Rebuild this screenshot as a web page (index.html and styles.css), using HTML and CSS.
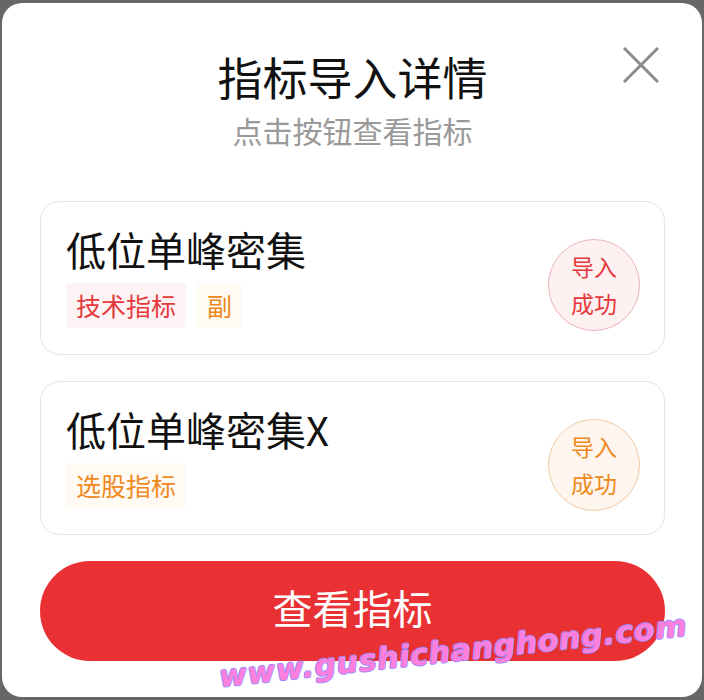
FILE: index.html
```html
<!DOCTYPE html>
<html lang="zh-CN">
<head>
  <meta charset="UTF-8">
  <meta name="viewport" content="width=device-width, initial-scale=1.0">
  <title>指标导入详情</title>
  <link rel="stylesheet" href="styles.css">
</head>
<body>
  <div class="modal">
    <button class="close-btn" aria-label="关闭">
      <svg width="36" height="36" viewBox="0 0 36 36">
        <line x1="1" y1="1" x2="35" y2="35" stroke="#8c8c8c" stroke-width="3" />
        <line x1="35" y1="1" x2="1" y2="35" stroke="#8c8c8c" stroke-width="3" />
      </svg>
    </button>
    <h1 class="modal-title">指标导入详情</h1>
    <p class="modal-sub">点击按钮查看指标</p>

    <div class="card-list">
      <div class="card">
        <div class="card-info">
          <h3>低位单峰密集</h3>
          <div class="tags">
            <span class="tag tag-red">技术指标</span>
            <span class="tag tag-orange">副</span>
          </div>
        </div>
        <div class="badge badge-red">导入<br>成功</div>
      </div>
      <div class="card">
        <div class="card-info">
          <h3>低位单峰密集X</h3>
          <div class="tags">
            <span class="tag tag-orange">选股指标</span>
          </div>
        </div>
        <div class="badge badge-orange">导入<br>成功</div>
      </div>
    </div>

    <button class="view-btn">查看指标</button>
  </div>

  <div class="watermark">www.gushichanghong.com</div>
</body>
</html>
```

FILE: styles.css
```css
body {
  margin: 0;
  padding: 3px 2px;
  background-color: #676767;
  font-family: "Noto Sans CJK SC", "Noto Sans", sans-serif;
  overflow: hidden;
}
.modal {
  position: relative;
  background-color: #fff;
  border-radius: 20px;
  padding: 46px 37px 37px 38px;
  height: 694px;
  box-sizing: border-box;
}
.close-btn {
  position: absolute;
  top: 44px;
  right: 43px;
  padding: 0;
  border: none;
  background: none;
  width: 36px;
  height: 36px;
}
.close-btn svg {
  display: block;
}
.modal-title {
  margin: 0;
  text-align: center;
  font-size: 45px;
  line-height: 56px;
  font-weight: 400;
  color: #111;
}
.modal-sub {
  margin: 5px 0 0;
  text-align: center;
  font-size: 30px;
  line-height: 40px;
  color: #999;
}
.card-list {
  margin-top: 51px;
  display: flex;
  flex-direction: column;
  gap: 26px;
}
.card {
  display: flex;
  border: 1px solid #e4e4e4;
  border-radius: 20px;
  padding: 23px 24px 23px 25px;
}
.card-info {
  flex: 1;
}
.card-info h3 {
  margin: 0;
  font-size: 40px;
  line-height: 48px;
  font-weight: 400;
  color: #111;
}
.tags {
  display: flex;
  gap: 11px;
  margin: 10px 0 3px;
}
.tag {
  font-size: 25px;
  line-height: 45px;
  padding: 0 10px;
  border-radius: 4px;
}
.tag-red {
  color: #e5383b;
  background-color: #fdf3f4;
}
.tag-orange {
  color: #ef891c;
  background-color: #fffaf3;
}
.badge {
  align-self: flex-end;
  width: 90px;
  height: 90px;
  border-radius: 50%;
  display: flex;
  align-items: center;
  justify-content: center;
  text-align: center;
  font-size: 23px;
  line-height: 37px;
}
.badge-red {
  color: #e5383b;
  background-color: #fdf1f2;
  border: 1px solid #e9b4ba;
}
.badge-orange {
  color: #ef891c;
  background-color: #fef6ee;
  border: 1px solid #f2caa3;
}
.view-btn {
  display: block;
  width: 100%;
  height: 100px;
  margin-top: 26px;
  padding: 0 0 8px;
  border: none;
  border-radius: 50px;
  background-color: #e93133;
  color: #fff;
  font-family: inherit;
  font-size: 40px;
}
.watermark {
  position: absolute;
  left: 221px;
  top: 659px;
  transform-origin: left bottom;
  transform: rotate(-6.3deg);
  font-family: "DejaVu Sans", sans-serif;
  font-weight: 700;
  font-style: italic;
  font-size: 30px;
  letter-spacing: 0.8px;
  color: #ff7fdc;
  text-shadow: 1px 0 #9b8cff, -1px 0 #9b8cff, 0 1px #9b8cff, 0 -1px #9b8cff;
  white-space: nowrap;
}
```
